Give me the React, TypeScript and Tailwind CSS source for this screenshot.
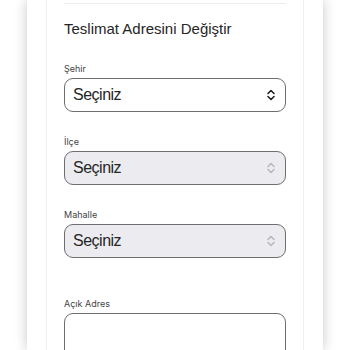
import React from 'react';

function Chevrons({ muted }: { muted?: boolean }) {
  return (
    <svg width="10" height="12" viewBox="0 0 10 12" fill="none" className={muted ? 'text-[#b8b8bd]' : 'text-[#222]'}>
      <path d="M2 4.5 L5 1.5 L8 4.5" stroke="currentColor" strokeWidth="1.6" strokeLinecap="round" strokeLinejoin="round" />
      <path d="M2 7.5 L5 10.5 L8 7.5" stroke="currentColor" strokeWidth="1.6" strokeLinecap="round" strokeLinejoin="round" />
    </svg>
  );
}

function SelectField({ label, disabled, className }: { label: string; disabled?: boolean; className?: string }) {
  return (
    <div className={className}>
      <div className="text-[9px] leading-[12px] text-[#444] mb-[3px] font-['Inter',sans-serif]">{label}</div>
      <div
        className={`h-[34px] rounded-[9px] border border-[#6e6e6e] flex items-center justify-between pl-[8px] pr-[9px] ${
          disabled ? 'bg-[#ececf0]' : 'bg-white'
        }`}
      >
        <span className="text-[16px] tracking-[-0.5px] text-[#262626]">Seçiniz</span>
        <Chevrons muted={disabled} />
      </div>
    </div>
  );
}

export default function App() {
  return (
    <div className="w-[350px] h-[350px] overflow-hidden bg-white font-['Liberation_Sans',Arial,sans-serif]">
      <div className="mx-[27px] h-full bg-white shadow-[0_0_12px_rgba(0,0,0,0.22)] px-[19px]">
        <div className="h-full border-x border-[#f0f0f0] px-[17px]">
          <div className="pt-[3px]">
            <div className="h-px bg-[#ececec]" />
          </div>
          <h1 className="mt-[15px] text-[15px] leading-[20px] text-[#262626]">
            Teslimat Adresini Değiştir
          </h1>
          <SelectField label="Şehir" className="mt-[24px]" />
          <SelectField label="İlçe" disabled className="mt-[24px]" />
          <SelectField label="Mahalle" disabled className="mt-[24px]" />
          <div className="mt-[40px]">
            <div className="text-[9px] leading-[12px] text-[#444] mb-[3px] font-['Inter',sans-serif]">Açık Adres</div>
            <div className="h-[80px] rounded-[9px] border border-[#6e6e6e] bg-white" />
          </div>
        </div>
      </div>
    </div>
  );
}
